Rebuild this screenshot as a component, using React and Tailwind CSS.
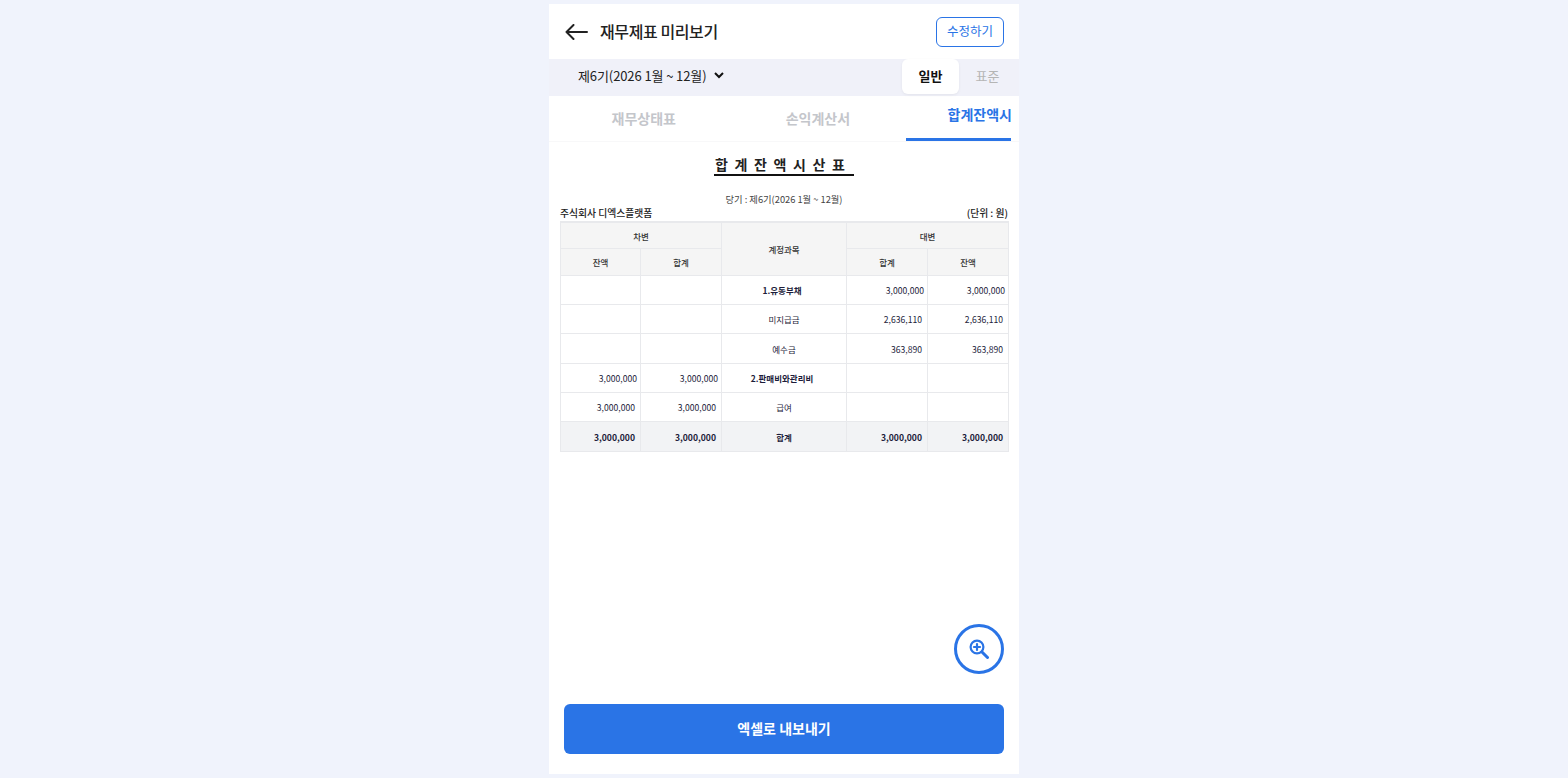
const cell = "border border-[#e8e9ec] text-right text-[8.6px] text-[#1c1c3a] px-0 pb-0";
const head = "border border-[#e8e9ec] bg-[#f5f5f5] text-center text-[8.5px] font-medium text-[#333] px-0 pb-0 pt-[2px]";

const rows = [
  { name: "1.유동부채", credit: ["3,000,000", "3,000,000"], bold: true, pad: "pr-[3px] pt-[2px]" },
  { name: "미지급금", credit: ["2,636,110", "2,636,110"], pad: "pr-[5px] pt-px" },
  { name: "예수금", credit: ["363,890", "363,890"], pad: "pr-[5px] pt-px" },
  { name: "2.판매비와관리비", debit: ["3,000,000", "3,000,000"], bold: true, pad: "pr-[3px] pt-[2px]" },
  { name: "급여", debit: ["3,000,000", "3,000,000"], pad: "pr-[5px] pt-px" },
];

function Row({ name, debit = [], credit = [], bold, pad }) {
  return (
    <tr className="h-[29.4px]">
      <td className={`${cell} ${pad}`}>{debit[0]}</td>
      <td className={`${cell} ${pad}`}>{debit[1]}</td>
      <td className={`${cell} !text-center !text-[8.5px] ${bold ? "pr-[4px] pt-[2px] font-bold" : "pt-px"}`}>{name}</td>
      <td className={`${cell} ${pad}`}>{credit[0]}</td>
      <td className={`${cell} ${pad}`}>{credit[1]}</td>
    </tr>
  );
}

function BalanceTable() {
  return (
    <table className="mt-px w-[449px] table-fixed border-collapse border-t-2 border-t-[#e8e9ec]">
      <colgroup>
        <col className="w-[80px]" />
        <col className="w-[81px]" />
        <col className="w-[125px]" />
        <col className="w-[81px]" />
        <col className="w-[81px]" />
      </colgroup>
      <thead>
        <tr className="h-[26px]">
          <th colSpan={2} className={head}>차변</th>
          <th rowSpan={2} className={head}>계정과목</th>
          <th colSpan={2} className={head}>대변</th>
        </tr>
        <tr className="h-[27px]">
          <th className={head}>잔액</th>
          <th className={head}>합계</th>
          <th className={head}>합계</th>
          <th className={head}>잔액</th>
        </tr>
      </thead>
      <tbody>
        {rows.map((r) => (
          <Row key={r.name} {...r} />
        ))}
        <tr className="h-[29.4px] bg-[#f2f3f5] font-bold">
          <td className={`${cell} pr-[5px] pt-[2px]`}>3,000,000</td>
          <td className={`${cell} pr-[5px] pt-[2px]`}>3,000,000</td>
          <td className={`${cell} !text-center !text-[8.5px] pt-[2px]`}>합계</td>
          <td className={`${cell} pr-[5px] pt-[2px]`}>3,000,000</td>
          <td className={`${cell} pr-[5px] pt-[2px]`}>3,000,000</td>
        </tr>
      </tbody>
    </table>
  );
}

export default function App() {
  return (
    <div className="h-[778px] bg-[#f0f3fc] py-1 font-['Noto_Sans_CJK_KR','Noto_Sans',sans-serif] overflow-hidden">
      <div className="relative mx-auto flex h-[770px] w-[470px] flex-col bg-white">
        {/* 상단 헤더 */}
        <div className="flex h-[55px] items-center justify-between pl-4 pr-[15px]">
          <div className="flex items-center gap-[12px]">
            <svg width="23" height="16" viewBox="0 0 23 16" fill="none" stroke="#222" strokeWidth="2" strokeLinecap="round" strokeLinejoin="round">
              <path d="M22 8H1.5M8.5 1L1.5 8l7 7" />
            </svg>
            <h1 className="pb-[2px] text-[16px] font-medium tracking-[-0.4px] text-[#222]">재무제표 미리보기</h1>
          </div>
          <button className="h-[30px] w-[68px] rounded-md border border-[#2a74e6] text-[12.5px] text-[#2a74e6]">
            수정하기
          </button>
        </div>

        {/* 기수 선택 */}
        <div className="flex h-[37px] items-start justify-between bg-[#f0f1f9] pl-[29px] pr-[3px]">
          <div className="flex h-[35px] items-center gap-[7px] pb-[2px] text-[13px] tracking-[-0.1px] text-[#222]">
            <span>제6기(2026 1월 ~ 12월)</span>
            <svg width="10" height="7" viewBox="0 0 10 7" fill="none" stroke="#111" strokeWidth="2">
              <path d="M1 1l4 4 4-4" />
            </svg>
          </div>
          <div className="flex items-center">
            <div className="flex h-[35px] w-[57px] items-center justify-center rounded-md bg-white pb-[2px] text-[13px] font-bold text-[#111] shadow-[0_1px_3px_rgba(0,0,0,0.06)]">
              일반
            </div>
            <div className="flex h-[35px] w-[57px] items-center justify-center pb-[2px] text-[13px] text-[#b5b5b5]">
              표준
            </div>
          </div>
        </div>

        {/* 탭 */}
        <div className="flex h-[46px] items-start border-b border-[#f8f8f9] pr-2 text-[14px] font-bold text-[#c4c6cb]">
          <div className="flex h-[45px] w-[190px] items-center justify-center">재무상태표</div>
          <div className="flex h-[45px] w-[157px] items-center justify-center pl-[2px]">손익계산서</div>
          <div className="ml-[11px] flex h-[45px] w-[105px] justify-end border-b-[3px] border-[#2a74e6] pt-2 text-[#2a74e6]">
            <span className="-mr-px">합계잔액시</span>
          </div>
        </div>

        {/* 시산표 */}
        <div className="flex flex-col px-[11px]">
          <h2 className="mx-auto mt-[14px] w-[140px] border-b-2 border-[#111] pb-px pl-px text-[14px] leading-[17px] font-bold tracking-[6.6px] text-[#222]">
            합계잔액시산표
          </h2>
          <p className="mt-[16px] text-center text-[9.3px] leading-[14px] text-[#444]">당기 : 제6기(2026 1월 ~ 12월)</p>
          <div className="flex justify-between text-[9.8px] leading-[14px] font-medium text-[#222]">
            <span>주식회사 디엑스플랫폼</span>
            <span>(단위 : 원)</span>
          </div>
          <BalanceTable />
        </div>

        {/* 확대 버튼 */}
        <button className="absolute right-[15px] top-[620px] flex h-[50px] w-[50px] items-center justify-center rounded-full border-[3px] border-[#2a74e6] bg-white">
          <svg width="20" height="20" viewBox="0 0 20 20" fill="none" stroke="#2a74e6" strokeWidth="2.2" strokeLinecap="round">
            <circle cx="8" cy="8" r="6.4" />
            <path d="M8 5v6M5 8h6" />
            <path d="M13 13l5.5 5.5" strokeWidth="3" />
          </svg>
        </button>

        {/* 하단 버튼 */}
        <div className="mt-auto px-[15px] pb-5">
          <button className="h-[50px] w-full rounded-md bg-[#2a74e6] pb-[2px] text-[14px] font-bold text-white">
            엑셀로 내보내기
          </button>
        </div>
      </div>
    </div>
  );
}
